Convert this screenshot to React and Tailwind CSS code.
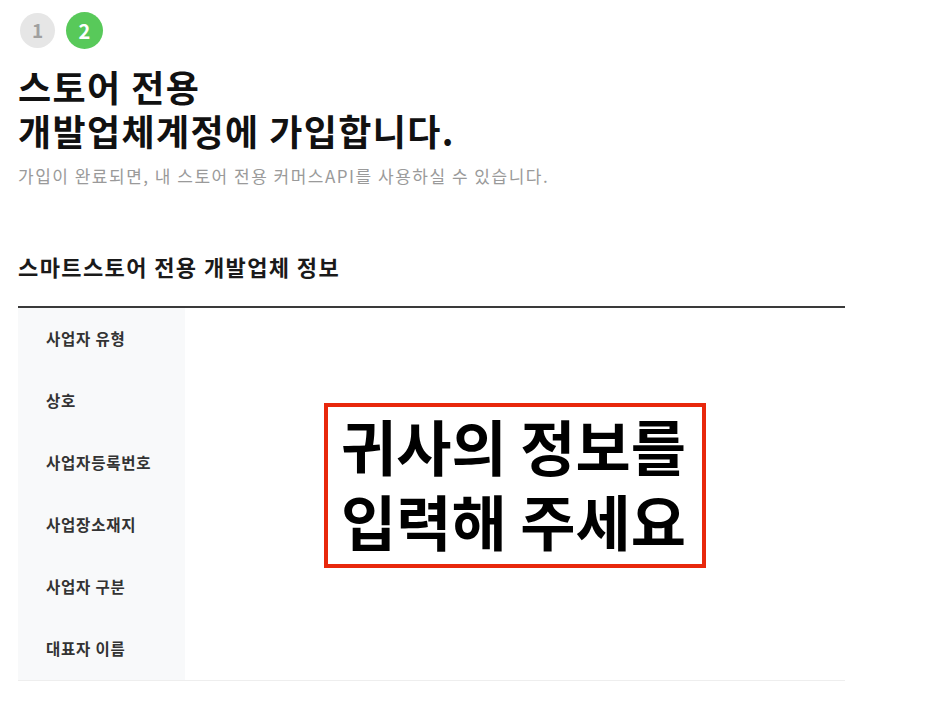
export default function App() {
  const labels = ["사업자 유형", "상호", "사업자등록번호", "사업장소재지", "사업자 구분", "대표자 이름"];

  return (
    <div
      className="bg-white min-h-screen w-[930px] h-[712px] overflow-hidden text-[#111]"
      style={{ fontFamily: '"Noto Sans CJK KR", "Noto Sans", sans-serif' }}
    >
      <div className="pl-[18px] pt-[12px] w-[845px]">
        {/* Steps */}
        <div className="flex items-center gap-[11px] pl-[2px]">
          <div className="w-[35px] h-[35px] rounded-full bg-[#e6e6e6] text-[#a0a0a0] flex items-center justify-center text-[19px] font-bold">
            1
          </div>
          <div className="w-[37px] h-[37px] rounded-full bg-[#58c95a] text-white flex items-center justify-center text-[20px] font-bold">
            2
          </div>
        </div>

        {/* Title */}
        <h1 className="mt-[15px] text-[36px] leading-[44px] font-bold tracking-[1.4px]">
          스토어 전용
          <br />
          개발업체계정에 가입합니다.
        </h1>
        <p className="mt-[12px] text-[17px] leading-[24px] text-[#9a9a9a] tracking-[1.5px]">
          가입이 완료되면, 내 스토어 전용 커머스API를 사용하실 수 있습니다.
        </p>

        {/* Section */}
        <h2 className="mt-[63px] text-[22px] leading-[30px] font-bold tracking-[1.4px] text-[#1a1a1a]">
          스마트스토어 전용 개발업체 정보
        </h2>

        <div className="mt-[25px] border-t-2 border-[#3a3a3a] border-b border-b-[#eeeeee] flex">
          <div className="w-[167px] bg-[#f8f9fa] pl-[28px] flex flex-col">
            {labels.map((l) => (
              <div key={l} className="h-[62px] shrink-0 flex items-center text-[15.5px] font-bold text-[#333] tracking-[0.8px]">
                {l}
              </div>
            ))}
          </div>
          <div className="flex-1 flex items-center justify-center pb-[17px]">
            <div className="border-[4px] border-[#e8280c] pl-[13px] pr-[16px] pt-0 pb-[7px]">
              <div className="text-[60px] leading-[75px] font-bold text-black whitespace-nowrap">
                귀사의 정보를
                <br />
                입력해 주세요
              </div>
            </div>
          </div>
        </div>
      </div>
    </div>
  );
}
